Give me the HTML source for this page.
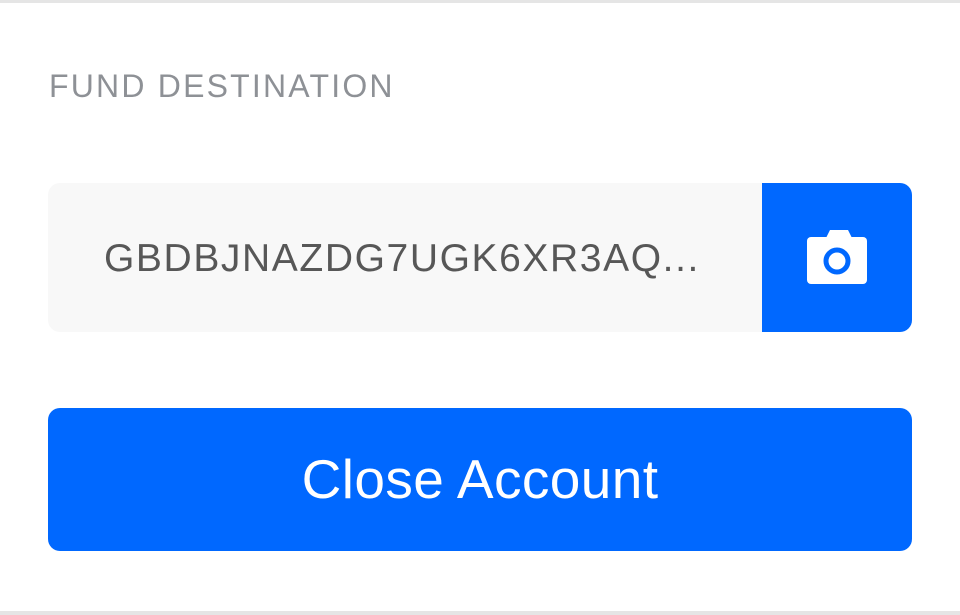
<!DOCTYPE html>
<html><head><style>
body{margin:0;width:960px;height:615px;background:#fff;position:relative;overflow:hidden;font-family:"Liberation Sans",sans-serif}
.tb{position:absolute;left:0;top:0;width:960px;height:3px;background:#e5e5e5}
.bb{position:absolute;left:0;top:611px;width:960px;height:4px;background:#e5e5e5}
.lbl{position:absolute;left:49px;top:66px;font-size:32px;letter-spacing:2.2px;color:#8e9196;line-height:40px}
.inp{position:absolute;left:48px;top:183px;width:864px;height:149px;background:#f8f8f8;border-radius:12px;overflow:hidden}
.addr{position:absolute;left:56px;top:54px;font-size:39px;color:#575757;line-height:44px;letter-spacing:1.6px}
.cam{position:absolute;right:0;top:0;width:150px;height:149px;background:#0068ff}
.btn{position:absolute;left:48px;top:408px;width:864px;height:143px;background:#0068ff;border-radius:12px;color:#fff;font-size:55px;letter-spacing:0.4px;text-align:center;line-height:143px}
</style></head><body>
<div class="tb"></div>
<div class="lbl">FUND DESTINATION</div>
<div class="inp"><div class="addr">GBDBJNAZDG7UGK6XR3AQ...</div>
<div class="cam"><svg width="150" height="149" viewBox="0 0 150 149" style="position:absolute;left:0;top:0">
<path d="M64 55 L68 47 H86 L90 55 Z" fill="#fff"/>
<rect x="45" y="54" width="60" height="47" rx="4" fill="#fff"/>
<circle cx="75" cy="78" r="11" fill="none" stroke="#0068ff" stroke-width="5"/>
</svg></div></div>
<div class="btn">Close Account</div>
<div class="bb"></div>
</body></html>
